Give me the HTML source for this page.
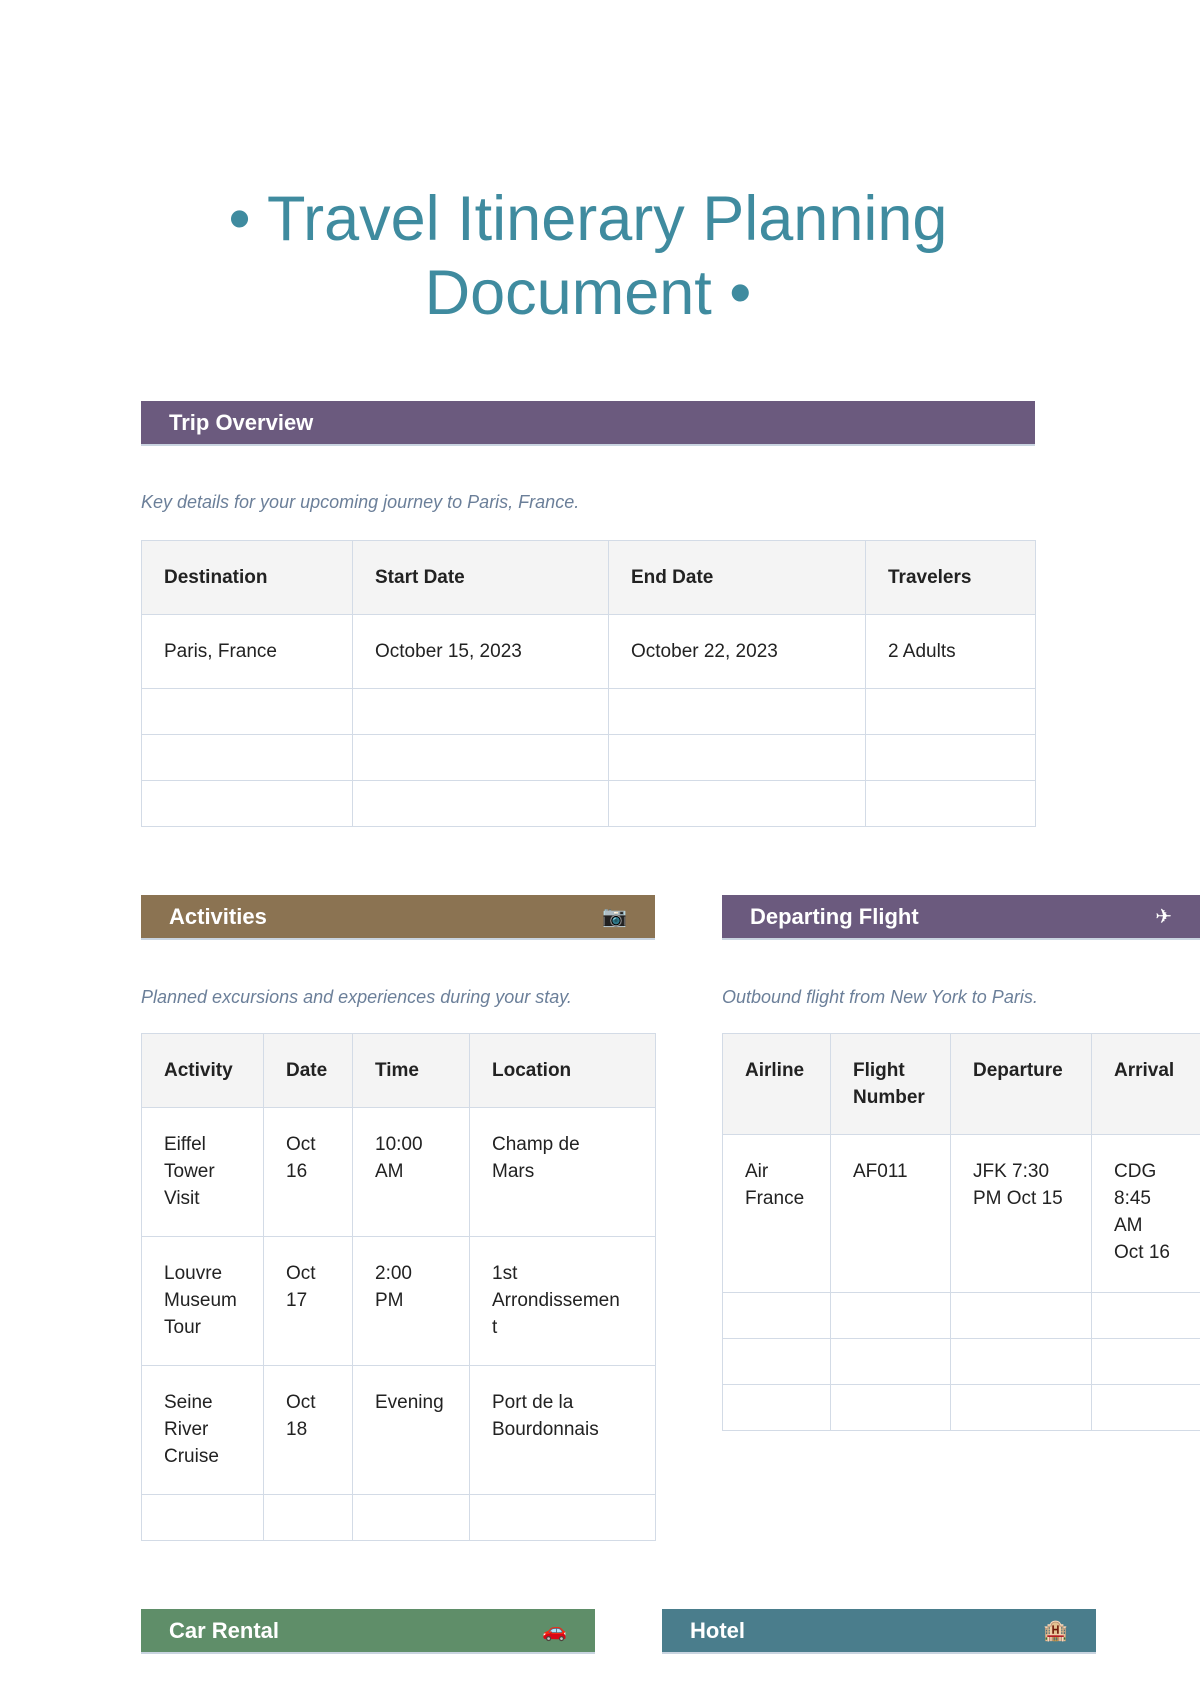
<!DOCTYPE html>
<html><head><meta charset="utf-8"><style>
*{margin:0;padding:0;box-sizing:border-box}
body{width:1200px;height:1697px;background:#fff;font-family:"Liberation Sans",Arial,sans-serif;color:#222;position:relative;overflow:hidden}
.t{position:absolute;left:141px;width:894px;top:182px;text-align:center;color:#3f8b9f;font-size:63px;line-height:74px}
.bar{position:absolute;height:45px;color:#fff;font-weight:bold;font-size:22px;line-height:44px;padding-left:28px;border-bottom:2px solid #c9d4e0}
.bar span{position:absolute;right:28px;top:0;font-size:20px;font-weight:normal}
.d{position:absolute;font-style:italic;color:#6b7f99;font-size:18px}
table{position:absolute;border-collapse:collapse;font-size:19px;line-height:27px;table-layout:fixed}
td,th{border:1.5px solid #d3dbe6;padding:23px 22px;vertical-align:top;text-align:left}
th{background:#f4f4f4;font-weight:bold}
tr.e td{padding:0;height:46px}
</style></head><body>
<div class="t">• Travel Itinerary Planning<br>Document •</div>

<div class="bar" style="left:141px;top:401px;width:894px;background:#6b5a7e">Trip Overview</div>
<div class="d" style="left:141px;top:492px">Key details for your upcoming journey to Paris, France.</div>
<table style="left:141px;top:540px;width:894px">
<col style="width:211px"><col style="width:256px"><col style="width:257px"><col style="width:170px">
<tr><th>Destination</th><th>Start Date</th><th>End Date</th><th>Travelers</th></tr>
<tr><td>Paris, France</td><td>October 15, 2023</td><td>October 22, 2023</td><td>2 Adults</td></tr>
<tr class="e"><td></td><td></td><td></td><td></td></tr>
<tr class="e"><td></td><td></td><td></td><td></td></tr>
<tr class="e"><td></td><td></td><td></td><td></td></tr>
</table>

<div class="bar" style="left:141px;top:895px;width:514px;background:#8b7352">Activities<span>📷</span></div>
<div class="d" style="left:141px;top:987px">Planned excursions and experiences during your stay.</div>
<table style="left:141px;top:1033px;width:514px">
<col style="width:122px"><col style="width:89px"><col style="width:117px"><col style="width:186px">
<tr><th>Activity</th><th>Date</th><th>Time</th><th>Location</th></tr>
<tr><td>Eiffel Tower Visit</td><td>Oct 16</td><td>10:00 AM</td><td style="height:129px;padding-right:50px">Champ de Mars</td></tr>
<tr><td>Louvre Museum Tour</td><td>Oct 17</td><td>2:00<br>PM</td><td style="height:129px">1st<br>Arrondissemen<br>t</td></tr>
<tr><td>Seine River Cruise</td><td>Oct 18</td><td>Evening</td><td style="height:129px">Port de la Bourdonnais</td></tr>
<tr class="e"><td></td><td></td><td></td><td></td></tr>
</table>

<div class="bar" style="left:722px;top:895px;width:490px;background:#6b5a7e">Departing Flight<span style="right:40px">✈</span></div>
<div class="d" style="left:722px;top:987px">Outbound flight from New York to Paris.</div>
<table style="left:722px;top:1033px;width:520px">
<col style="width:108px"><col style="width:120px"><col style="width:141px"><col style="width:151px">
<tr><th>Airline</th><th>Flight Number</th><th>Departure</th><th style="height:100px">Arrival</th></tr>
<tr><td>Air France</td><td>AF011</td><td>JFK 7:30 PM Oct 15</td><td style="height:158px">CDG<br>8:45<br>AM<br>Oct 16</td></tr>
<tr class="e"><td></td><td></td><td></td><td></td></tr>
<tr class="e"><td></td><td></td><td></td><td></td></tr>
<tr class="e"><td></td><td></td><td></td><td></td></tr>
</table>

<div class="bar" style="left:141px;top:1609px;width:454px;background:#5f8e69">Car Rental<span>🚗</span></div>
<div class="bar" style="left:662px;top:1609px;width:434px;background:#4a7d8c">Hotel<span>🏨</span></div>
</body></html>
